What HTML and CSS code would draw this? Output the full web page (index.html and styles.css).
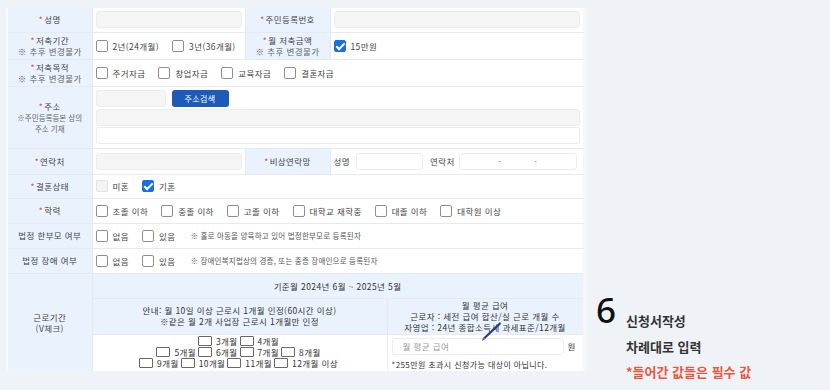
FILE: index.html
```html
<!DOCTYPE html>
<html lang="ko">
<head>
    <meta charset="UTF-8">
    <meta name="viewport" content="width=device-width, initial-scale=1.0">
    <title>신청서작성</title>
    <link rel="stylesheet" href="styles.css">
</head>
<body>
    <div class="card">
        <table class="form-table">
            <colgroup>
                <col class="c-label">
                <col class="c-value">
                <col class="c-label2">
                <col class="c-value2">
            </colgroup>
            <tr class="r24">
                <th><span class="req">*</span>성명</th>
                <td><div class="field grey"></div></td>
                <th><span class="req">*</span>주민등록번호</th>
                <td><div class="field grey"></div></td>
            </tr>
            <tr class="r27">
                <th><span class="req">*</span>저축기간<br><span class="note">※ 추후 변경불가</span></th>
                <td>
                    <div class="checks">
                        <label class="chk"><span class="box"></span>2년(24개월)</label>
                        <label class="chk"><span class="box"></span>3년(36개월)</label>
                    </div>
                </td>
                <th><span class="req">*</span>월 저축금액<br><span class="note">※ 추후 변경불가</span></th>
                <td>
                    <div class="checks">
                        <label class="chk"><span class="box on"></span>15만원</label>
                    </div>
                </td>
            </tr>
            <tr class="r27">
                <th><span class="req">*</span>저축목적<br><span class="note">※ 추후 변경불가</span></th>
                <td colspan="3">
                    <div class="checks">
                        <label class="chk"><span class="box"></span>주거자금</label>
                        <label class="chk"><span class="box"></span>창업자금</label>
                        <label class="chk"><span class="box"></span>교육자금</label>
                        <label class="chk"><span class="box"></span>결혼자금</label>
                    </div>
                </td>
            </tr>
            <tr class="r61">
                <th><span class="req">*</span>주소<br><span class="note small">※주민등록등본 상의<br>주소 기재</span></th>
                <td colspan="3" class="addr">
                    <div class="addr-top">
                        <div class="field grey zip"></div>
                        <button class="btn-addr">주소검색</button>
                    </div>
                    <div class="field grey"></div>
                    <div class="field white"></div>
                </td>
            </tr>
            <tr class="r26">
                <th><span class="req">*</span>연락처</th>
                <td><div class="field grey"></div></td>
                <th><span class="req">*</span>비상연락망</th>
                <td>
                    <div class="emergency">
                        <span>성명</span>
                        <div class="field white name"></div>
                        <span>연락처</span>
                        <div class="field white phone"><span>-</span><span>-</span></div>
                    </div>
                </td>
            </tr>
            <tr class="r24">
                <th><span class="req">*</span>결혼상태</th>
                <td colspan="3">
                    <div class="checks">
                        <label class="chk"><span class="box off"></span>미혼</label>
                        <label class="chk"><span class="box on"></span>기혼</label>
                    </div>
                </td>
            </tr>
            <tr class="r25">
                <th><span class="req">*</span>학력</th>
                <td colspan="3">
                    <div class="checks">
                        <label class="chk"><span class="box"></span>초졸 이하</label>
                        <label class="chk"><span class="box"></span>중졸 이하</label>
                        <label class="chk"><span class="box"></span>고졸 이하</label>
                        <label class="chk"><span class="box"></span>대학교 재학중</label>
                        <label class="chk"><span class="box"></span>대졸 이하</label>
                        <label class="chk"><span class="box"></span>대학원 이상</label>
                    </div>
                </td>
            </tr>
            <tr class="r25">
                <th>법정 한부모 여부</th>
                <td colspan="3">
                    <div class="checks">
                        <label class="chk"><span class="box"></span>없음</label>
                        <label class="chk"><span class="box"></span>있음</label>
                        <span class="hint">※ 홀로 아동을 양육하고 있어 법정한부모로 등록된자</span>
                    </div>
                </td>
            </tr>
            <tr class="r25">
                <th>법정 장애 여부</th>
                <td colspan="3">
                    <div class="checks">
                        <label class="chk"><span class="box"></span>없음</label>
                        <label class="chk"><span class="box"></span>있음</label>
                        <span class="hint">※ 장애인복지법상의 경증, 또는 중증 장애인으로 등록된자</span>
                    </div>
                </td>
            </tr>
            <tr>
                <th class="work-label">근로기간<br>(V체크)</th>
                <td colspan="3" class="work">
                    <div class="work-head">기준월 2024년 6월 ~ 2025년 5월</div>
                    <div class="work-grid">
                        <div class="work-info">안내: 월 10일 이상 근로시 1개월 인정(60시간 이상)<br>※같은 월 2개 사업장 근로시 1개월만 인정</div>
                        <div class="work-info">월 평균 급여<br>근로자 : 세전 급여 합산/실 근로 개월 수<br>자영업 : 24년 종합소득세 과세표준/12개월</div>
                        <div class="months">
                            <div><label class="mchk"><span class="box"></span>3개월</label><label class="mchk"><span class="box"></span>4개월</label></div>
                            <div><label class="mchk"><span class="box"></span>5개월</label><label class="mchk"><span class="box"></span>6개월</label><label class="mchk"><span class="box"></span>7개월</label><label class="mchk"><span class="box"></span>8개월</label></div>
                            <div><label class="mchk"><span class="box"></span>9개월</label><label class="mchk"><span class="box"></span>10개월</label><label class="mchk"><span class="box"></span>11개월</label><label class="mchk"><span class="box"></span>12개월 이상</label></div>
                        </div>
                        <div class="salary">
                            <div class="salary-row">
                                <div class="field white pay">월 평균 급여</div>
                                <span>원</span>
                            </div>
                            <p class="salary-note">*255만원 초과시 신청가능 대상이 아닙니다.</p>
                        </div>
                    </div>
                </td>
            </tr>
        </table>
        <svg class="pen" width="22" height="22" viewBox="0 0 22 22">
            <path d="M20 1 L21 3 L5 18 L2 20 L3 17 Z" fill="#1f3f7a"/>
            <path d="M3 17 L5 18" stroke="#7a93c0" stroke-width="1"/>
        </svg>
    </div>

    <div class="side">
        <div class="step">6</div>
        <div class="side-text">
            <p>신청서작성</p>
            <p>차례대로 입력</p>
            <p class="red">*들어간 값들은 필수 값</p>
        </div>
    </div>
</body>
</html>
```

FILE: styles.css
```css
body {
    margin: 0;
    padding: 0;
    background-color: #eff3f7;
    font-family: "Noto Sans CJK KR", "Noto Sans", sans-serif;
    display: flex;
    height: 390px;
    overflow: hidden;
}
.card {
    position: relative;
    margin: 8px 0 0 8px;
    width: 575px;
    height: 363px;
    overflow: hidden;
    background-color: #fff;
    border-right: 4px solid #f6f6f6;
    box-shadow: -2px 0 0 #fafafa;
}
.form-table {
    width: 575px;
    table-layout: fixed;
    border-collapse: collapse;
    font-size: 8.5px;
    letter-spacing: 0.4px;
    color: #444;
}
.c-label { width: 84px; }
.c-value { width: 153px; }
.c-label2 { width: 85px; }
.c-value2 { width: 253px; }
.form-table th,
.form-table td {
    border-bottom: 1px solid #e6e9ed;
    padding: 0 3px;
    vertical-align: middle;
}
.form-table th {
    background-color: #eaf3fd;
    font-weight: 400;
    text-align: center;
    line-height: 11px;
    color: #444;
    border-right: 1px solid #e6e9ed;
}
.form-table td {
    border-right: 1px solid #e6e9ed;
}
.r24 { height: 24px; }
.r25 { height: 25px; }
.r26 { height: 26px; }
.r27 { height: 27px; }
.r61 { height: 61px; }
.req {
    color: #e0483a;
    margin-right: 1px;
}
.note {
    color: #666;
}
.note.small {
    font-size: 7.5px;
    letter-spacing: 0;
}
.field {
    height: 17px;
    border-radius: 3px;
    box-sizing: border-box;
}
.field.grey {
    background-color: #f5f5f5;
    border: 1px solid #ececec;
}
.field.white {
    background-color: #fff;
    border: 1px solid #ececec;
}
.checks {
    display: flex;
    align-items: center;
}
.chk {
    display: flex;
    align-items: center;
    margin-right: 13px;
    white-space: nowrap;
}
.box {
    display: inline-block;
    width: 12px;
    height: 12px;
    box-sizing: border-box;
    border: 1px solid #8e8e8e;
    border-radius: 2px;
    background-color: #fff;
    margin-right: 5px;
    position: relative;
}
.box.on {
    background-color: #1b6fe0;
    border-color: #1b6fe0;
}
.box.on:after {
    content: "";
    position: absolute;
    left: 3px;
    top: 0px;
    width: 3px;
    height: 7px;
    border: solid #fff;
    border-width: 0 2px 2px 0;
    transform: rotate(45deg);
}
.box.off {
    background-color: #f4f4f4;
    border-color: #e2e2e2;
}
.hint {
    font-size: 7.5px;
    color: #555;
    margin-left: 2px;
    letter-spacing: 0.2px;
}
.addr {
    padding-top: 3px !important;
    padding-bottom: 3px !important;
}
.addr-top {
    display: flex;
    gap: 6px;
    margin-bottom: 1px;
}
.addr .field {
    margin-bottom: 1px;
}
.zip {
    width: 70px;
}
.btn-addr {
    width: 57px;
    height: 17px;
    border: none;
    border-radius: 3px;
    background-color: #1c5cb8;
    color: #fff;
    font-family: inherit;
    font-size: 8px;
    letter-spacing: 0.4px;
    padding: 0;
}
.emergency {
    display: flex;
    align-items: center;
}
.emergency .name {
    width: 67px;
    margin: 0 7px 0 6px;
}
.emergency .phone {
    width: 118px;
    margin-left: 4px;
    display: flex;
    justify-content: space-around;
    align-items: center;
    padding: 0 22px;
    color: #777;
}
.work-label {
    height: 99px;
}
.form-table td.work {
    padding: 0;
    vertical-align: top;
}
.work-head {
    height: 24px;
    line-height: 24px;
    background-color: #eaf3fd;
    text-align: center;
    border-bottom: 1px solid #e6e9ed;
    color: #333;
}
.work-grid {
    display: grid;
    grid-template-columns: 295px 1fr;
    grid-template-rows: 36px auto;
}
.work-info {
    height: 36px;
    box-sizing: border-box;
    overflow: hidden;
    background-color: #eaf3fd;
    text-align: center;
    line-height: 11px;
    display: flex;
    align-items: center;
    justify-content: center;
    border-bottom: 1px solid #e6e9ed;
    color: #333;
}
.work-info:first-child {
    border-right: 1px solid #e6e9ed;
}
.months {
    text-align: center;
    padding-top: 1px;
    border-right: 1px solid #e6e9ed;
    color: #333;
}
.months div {
    display: flex;
    justify-content: center;
    height: 11px;
    align-items: center;
    line-height: 11px;
}
.mchk {
    display: flex;
    align-items: center;
    margin-right: 2px;
}
.mchk .box {
    width: 14px;
    height: 10px;
    border-radius: 1px;
    border-color: #666;
    margin-right: 4px;
}
.salary {
    padding: 3px 3px 0 4px;
    color: #333;
}
.salary-row {
    display: flex;
    align-items: center;
}
.pay {
    width: 172px;
    height: 17px;
    line-height: 15px;
    padding-left: 10px;
    color: #999;
    margin-right: 4px;
}
.salary-note {
    margin: 5px 0 0 0;
    font-size: 8px;
    line-height: 10px;
}
.pen {
    position: absolute;
    left: 472px;
    top: 313px;
}
.side {
    display: flex;
    align-items: flex-start;
    margin-top: 290px;
    margin-left: 9px;
}
.step {
    font-family: "Noto Sans", sans-serif;
    font-size: 35px;
    font-weight: 500;
    line-height: 40px;
    color: #111;
    width: 30px;
}
.side-text {
    margin-top: 22px;
}
.side-text p {
    margin: 0 0 7.5px 0;
    font-size: 13px;
    font-weight: 700;
    line-height: 18px;
    color: #333;
}
.side-text .red {
    color: #e9573c;
}
```
